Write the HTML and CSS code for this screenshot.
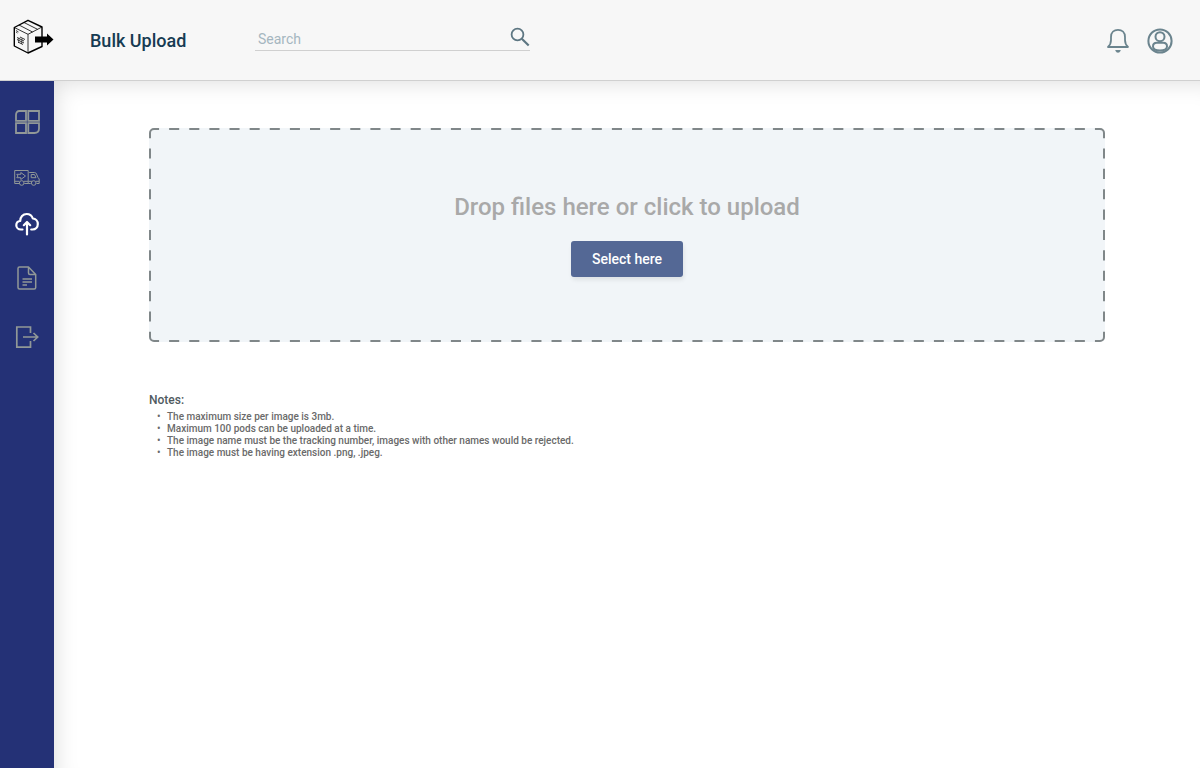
FILE: index.html
```html
<!DOCTYPE html>
<html lang="en">
<head>
<meta charset="utf-8">
<meta name="viewport" content="width=device-width, initial-scale=1">
<title>Bulk Upload</title>
<link rel="stylesheet" href="styles.css">
</head>
<body>
<header class="topbar">
  <a class="logo" href="#" aria-label="Home">
    <svg width="41" height="36" viewBox="0 0 41 36" fill="none" stroke="#000">
      <path d="M15 1.300 29 8V27.500L15 34 1.300 27V8.500Z" stroke-width="1.400" stroke-linejoin="round"/>
      <path d="M1.300 8.500 15 15.300 29 8M15 15.300V34M6 6 19.500 13M11 3.500 24.500 10.300" stroke-width=".8"/>
      <path d="M3 11.500 5.500 13M3 13 4.500 14" stroke-width=".7"/>
      <path d="M4 18.500 11 22M4 20.500 11 24M5 23 10 25.500M7 18 12 20.500" stroke-width=".8"/>
      <path d="M6 18.500 5.500 24M9 19.500 8.500 25" stroke-width=".5"/>
      <path d="M22 17.500H34V14.500L40.500 20.500 34 26.500V23.500H22Z" fill="#000" stroke="none"/>
    </svg>
  </a>
  <h1 class="title">Bulk Upload</h1>
  <form class="search" role="search">
    <input class="search-input" type="search" placeholder="Search" aria-label="Search">
    <button class="icon-button" type="button" aria-label="Search">
      <svg width="20" height="20" viewBox="0 0 20 20" fill="none" stroke="#5d7682">
        <circle cx="7.500" cy="7.500" r="5.900" stroke-width="1.800"/>
        <path d="M11.800 11.800 18.700 18.500" stroke-width="2.200"/>
      </svg>
    </button>
  </form>
  <div class="actions">
    <button class="icon-button" type="button" aria-label="Notifications">
      <svg width="24" height="26" viewBox="0 0 24 26" fill="none" stroke="#6b848e" stroke-width="1.800">
        <path d="M2 19C4.300 17 5 15.500 5 12V9C5 4.500 8 1.900 12 1.900S19 4.500 19 9V12C19 15.500 19.700 17 22 19Z" stroke-linejoin="round"/>
        <path d="M9.700 22.600C10.300 24.700 13.700 24.700 14.300 22.600Z" fill="#6b848e" stroke-width="1"/>
      </svg>
    </button>
    <button class="icon-button" type="button" aria-label="Account">
      <svg width="26" height="26" viewBox="0 0 26 26" fill="none" stroke="#6b848e" stroke-width="2">
        <circle cx="13" cy="13" r="11.600"/>
        <circle cx="13" cy="8.700" r="4.500"/>
        <path d="M9.800 14.800H16.200C18.800 14.800 20 16.300 20 18.400 20 21.300 17 22.400 13 22.400S6 21.300 6 18.400C6 16.300 7.200 14.800 9.800 14.800Z"/>
      </svg>
    </button>
  </div>
</header>
<div class="body">
  <nav class="sidebar" aria-label="Main">
    <a class="nav-link" href="#" aria-label="Dashboard">
      <svg width="26" height="24" viewBox="0 0 26 24" fill="none" stroke="#919897" stroke-width="1.800">
        <path d="M5.500 1H12V10.800H2V5Q2 1 5.500 1ZM14.300 1H25V10.800H14.300ZM2 13.200H12V23H2ZM14.300 13.200H25V18.500Q25 23 20.500 23H14.300Z"/>
      </svg>
    </a>
    <a class="nav-link" href="#" aria-label="Shipments">
      <svg width="26" height="18" viewBox="0 0 26 18" fill="none" stroke="#919897" stroke-width="1">
        <path d="M5 14.500H.700V1.500H14.200V14.500H10.300M.700 12.300H5.500M10 12.300H14.200M14.200 14.500H16.700M15.200 3.500H20.500Q22 3.500 22.500 5L24 8.500 25.200 10V14.500H22.500M17.200 8.700V5.500H20.500L22 8.700ZM14.500 12.300H18M22 12.300H25"/>
        <path d="M2.800 5.300H6.800V3.500L11.500 7 6.800 10.500V8.700H2.800L4 7Z"/>
        <circle cx="7.700" cy="14" r="2.300"/><circle cx="19.700" cy="14" r="2.300"/>
      </svg>
    </a>
    <a class="nav-link" href="#" aria-label="Bulk upload" aria-current="page">
      <svg width="24" height="24" viewBox="0 0 24 24" fill="none" stroke="#fff" stroke-width="2.200" stroke-linecap="round" stroke-linejoin="round">
        <path d="M7.500 17.500H6C3.200 17.500 1.300 15.700 1.300 13.200 1.300 10.900 3 9.200 5.200 9 5.200 5 7.900 2 11.700 2 14.600 2 16.900 3.700 17.800 6.500 20.700 6.700 22.800 9 22.800 12 22.800 15.200 20.600 17.500 17.500 17.500H16.200"/>
        <path d="M12 22.500V11M8.800 13.200 12 10 15.200 13.200"/>
      </svg>
    </a>
    <a class="nav-link" href="#" aria-label="Reports">
      <svg width="20" height="24" viewBox="0 0 20 24" fill="none" stroke="#919897" stroke-width="1.500" stroke-linejoin="round">
        <path d="M2.500 1H11.500L18.700 8.500V21.500Q18.700 23 17.200 23H2.500Q1 23 1 21.500V2.500Q1 1 2.500 1ZM11.500 1V7Q11.500 8.500 13 8.500H18.700M5.500 13H15M5.500 16H15M5.500 19H10"/>
      </svg>
    </a>
    <a class="nav-link" href="#" aria-label="Log out">
      <svg width="24" height="24" viewBox="0 0 24 24" fill="none" stroke="#919897" stroke-width="1.700">
        <path d="M15.500 8V2H1.800V22.200H15.500V16M8 12H22.500M18.500 8 22.700 12 18.500 16"/>
      </svg>
    </a>
  </nav>
  <main class="content">
    <section class="dropzone">
      <svg class="dropzone-outline" aria-hidden="true">
        <defs>
          <mask id="dashes" maskUnits="userSpaceOnUse" x="0" y="0" width="100%" height="100%">
            <g stroke="#fff" stroke-width="16" stroke-dasharray="10 10">
              <line x1="0" y1="0" x2="100%" y2="0" pathLength="950"/>
              <line x1="0" y1="100%" x2="100%" y2="100%" pathLength="950"/>
              <line x1="0" y1="0" x2="0" y2="100%" pathLength="210"/>
              <line x1="100%" y1="0" x2="100%" y2="100%" pathLength="210"/>
            </g>
          </mask>
        </defs>
        <g mask="url(#dashes)"><rect class="dropzone-edge" x="1" y="1" rx="4"/></g>
      </svg>
      <h2 class="dropzone-title">Drop files here or click to upload</h2>
      <button class="select-button" type="button">Select here</button>
    </section>
    <section class="notes">
      <h3 class="notes-title">Notes:</h3>
      <ul class="notes-list">
        <li>The maximum size per image is 3mb.</li>
        <li>Maximum 100 pods can be uploaded at a time.</li>
        <li>The image name must be the tracking number, images with other names would be rejected.</li>
        <li>The image must be having extension .png, .jpeg.</li>
      </ul>
    </section>
  </main>
</div>
</body>
</html>
```
FILE: styles.css
```css
* { box-sizing: border-box; }
body {
  margin: 0;
  min-height: 100vh;
  display: flex;
  flex-direction: column;
  background: #fff;
  font-family: Roboto, "Liberation Sans", sans-serif;
}
h1, h2, h3, ul { margin: 0; padding: 0; }
h1, h2, h3 { font-weight: 500; }
svg { display: block; }
button { font: inherit; cursor: pointer; }
.topbar {
  display: flex;
  align-items: flex-start;
  padding: 19px 27px 0 13px;
  min-height: 81px;
  background: #f7f7f7;
  border-bottom: 1px solid #d0d0d0;
}
.logo { flex: none; width: 77px; }
.title {
  flex: none;
  width: 165px;
  padding-top: 10px;
  font-size: 18px;
  line-height: 24px;
  color: #163b52;
}
.search {
  display: flex;
  align-items: flex-start;
  width: 275px;
  margin-top: 8px;
  border-bottom: 1px solid #d0d0d0;
}
.search-input {
  flex: 1;
  min-width: 0;
  height: 23px;
  padding: 0 3px;
  border: 0;
  outline: 0;
  background: none;
  font: 14px/20px Roboto, "Liberation Sans", sans-serif;
  color: #163b52;
}
.search-input::placeholder { color: #a5b6c0; opacity: 1; }
.icon-button { padding: 0; border: 0; background: none; }
.actions {
  display: flex;
  align-items: center;
  gap: 17px;
  margin: 9px 0 0 auto;
}
.body { flex: 1; display: flex; }
.sidebar {
  flex: none;
  display: flex;
  flex-direction: column;
  align-items: center;
  width: 54px;
  padding-top: 12px;
  background: #243176;
}
.nav-link {
  display: flex;
  align-items: center;
  justify-content: center;
  width: 54px;
  height: 57px;
}
.nav-link:nth-child(2) { height: 56px; }
.nav-link:nth-child(3) { height: 36px; }
.nav-link:nth-child(4) { height: 72px; }
.nav-link:nth-child(5) { height: 46px; }
.content {
  flex: 1;
  padding: 47px 95px;
  box-shadow: inset 12px 12px 24px -12px #00000026;
}
.dropzone {
  position: relative;
  display: flex;
  flex-direction: column;
  align-items: center;
  gap: 18px;
  padding: 63px 20px 65px;
  border-radius: 5px;
  background: #f1f5f8;
}
.dropzone-outline {
  position: absolute;
  inset: 0;
  width: 100%;
  height: 100%;
  pointer-events: none;
}
.dropzone-edge {
  width: calc(100% - 2px);
  height: calc(100% - 2px);
  fill: none;
  stroke: #808789;
  stroke-width: 2px;
}
.dropzone-title { font-size: 24px; line-height: 32px; color: #a9a9a9; }
.select-button {
  width: 112px;
  height: 36px;
  padding: 0;
  border: 0;
  border-radius: 3px;
  background: #546895;
  box-shadow: 1px 3px 4px #00000014;
  color: #fff;
  font-size: 14px;
  font-weight: 500;
}
.notes { padding-top: 50px; }
.notes-title { font-size: 12px; line-height: 16px; color: #505a60; }
.notes-list {
  padding: 3px 0 0 18px;
  list-style: none;
  font-size: 10px;
  font-weight: 500;
  line-height: 12px;
  color: #6a6a6a;
}
.notes-list li { position: relative; }
.notes-list li::before { content: "•"; position: absolute; left: -10px; }
```
